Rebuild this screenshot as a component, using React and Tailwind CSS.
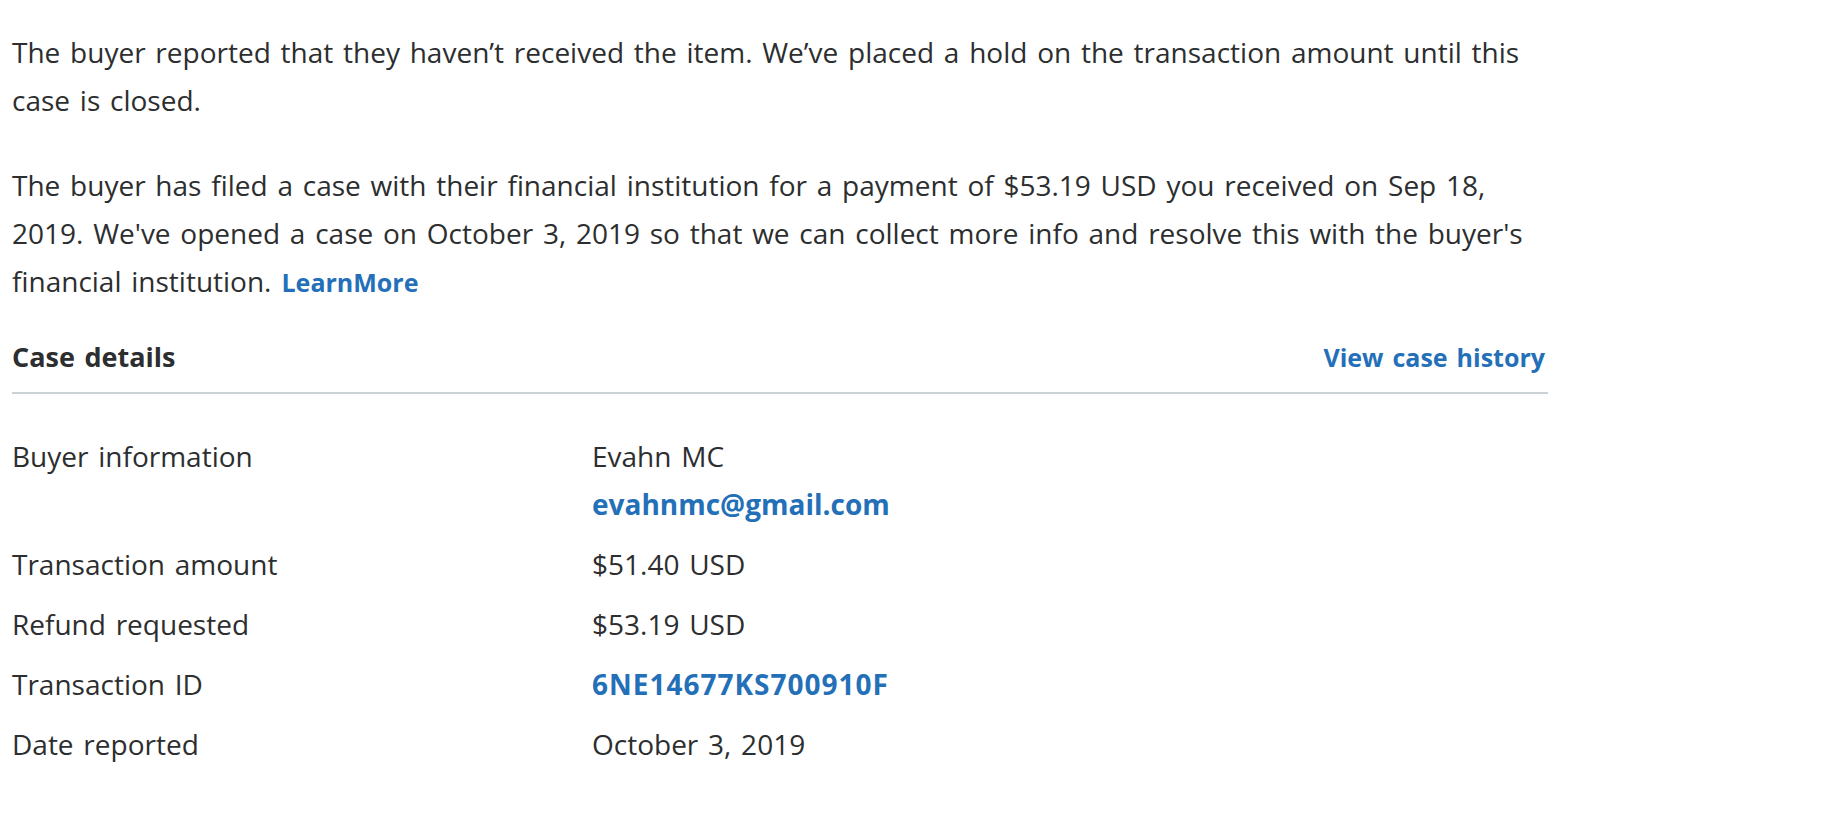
export default function App() {
  const rows = [
    { label: "Transaction amount", value: "$51.40 USD" },
    { label: "Refund requested", value: "$53.19 USD" },
    { label: "Transaction ID", value: "6NE14677KS700910F", link: true },
    { label: "Date reported", value: "October 3, 2019" },
  ];

  return (
    <div className="min-h-screen bg-white text-[#2c2e2f] font-['Open_Sans',sans-serif] [word-spacing:2.5px]">
      <div className="w-[1548px] pl-[12px] pt-[28px]">
        {/* Intro */}
        <p className="text-[28px] leading-[48px] mb-[37px]">
          The buyer reported that they haven’t received the item. We’ve placed a hold on the transaction amount until this case is closed.
        </p>

        <p className="text-[28px] leading-[48px]">
          The buyer has filed a case with their financial institution for a payment of $53.19 USD you received on Sep 18, 2019. We've opened a case on October 3, 2019 so that we can collect more info and resolve this with the buyer's financial institution.
          <a href="#" className="ml-[10px] text-[25px] font-bold text-[#2470b8]">
            LearnMore
          </a>
        </p>

        {/* Case details header */}
        <div className="mt-[33px] flex items-baseline justify-between border-b-2 border-[#cbd2d6] pb-[17px]">
          <h2 className="text-[27px] leading-[36px] font-bold">Case details</h2>
          <a href="#" className="text-[25px] leading-[36px] font-bold text-[#2470b8] pr-[3px]">
            View case history
          </a>
        </div>

        {/* Details */}
        <div className="mt-[38px] grid grid-cols-[580px_1fr] gap-y-[12px] text-[28px] leading-[48px]">
          <div>Buyer information</div>
          <div>
            <div>Evahn MC</div>
            <a href="#" className="block font-bold text-[#2470b8]">
              evahnmc@gmail.com
            </a>
          </div>

          {rows.map((row) => (
            <div key={row.label} className="contents">
              <div>{row.label}</div>
              {row.link ? (
                <a href="#" className="font-bold text-[#2470b8] tracking-[1px]">
                  {row.value}
                </a>
              ) : (
                <div>{row.value}</div>
              )}
            </div>
          ))}
        </div>
      </div>
    </div>
  );
}
